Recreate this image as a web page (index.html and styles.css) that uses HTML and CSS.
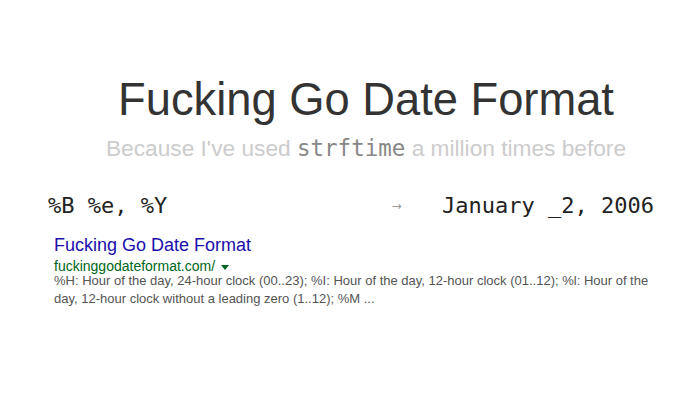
FILE: index.html
```html
<!DOCTYPE html>
<html>
<head>
<meta charset="utf-8">
<link rel="stylesheet" href="styles.css">
</head>
<body>
<div class="page">
  <header class="hero">
    <h1 class="title">Fucking Go Date Format</h1>
    <p class="subtitle">Because I've used <code class="code">strftime</code> a million times before</p>
  </header>
  <div class="row">
    <span class="fmt">%B %e, %Y</span>
    <span class="arrow">→</span>
    <span class="out">January _2, 2006</span>
  </div>
  <div class="result">
    <a class="r-title">Fucking Go Date Format</a>
    <div class="r-url">fuckinggodateformat.com/ <span class="caret"></span></div>
    <p class="r-snippet">%H: Hour of the day, 24-hour clock (00..23); %I: Hour of the day, 12-hour clock (01..12); %l: Hour of the day, 12-hour clock without a leading zero (1..12); %M ...</p>
  </div>
</div>
</body>
</html>
```

FILE: styles.css
```css
html, body {
  margin: 0;
  padding: 0;
  background: #fff;
}
.page {
  width: 700px;
  height: 400px;
  font-family: "Liberation Sans", Arial, sans-serif;
}
.hero {
  padding: 74px 0 0 32px;
  text-align: center;
}
.title {
  margin: 0;
  font-weight: normal;
  font-size: 45.3px;
  line-height: 52px;
  color: #333;
}
.subtitle {
  margin: 8px 0 0;
  font-size: 22.7px;
  line-height: 28px;
  color: #ccc;
}
.code {
  font-family: "DejaVu Sans Mono", monospace;
  font-size: 22.5px;
  color: #888;
}
.row {
  display: flex;
  align-items: center;
  justify-content: space-between;
  margin-top: 31px;
  padding: 0 46px 0 48px;
  font-family: "DejaVu Sans Mono", monospace;
  font-size: 22px;
  color: #222;
}
.arrow {
  font-family: "DejaVu Sans", sans-serif;
  font-size: 12px;
  color: #999;
  margin-left: 184px;
}
.result {
  padding: 14px 0 0 54px;
  width: 600px;
}
.r-title {
  display: block;
  font-size: 18px;
  line-height: 26px;
  color: #1a0dab;
}
.r-url {
  font-size: 14px;
  line-height: 17px;
  color: #006621;
}
.caret {
  display: inline-block;
  width: 0;
  height: 0;
  border-left: 4px solid transparent;
  border-right: 4px solid transparent;
  border-top: 5px solid #006621;
  vertical-align: middle;
  margin-left: 2px;
}
.r-snippet {
  margin: -3px 0 0;
  font-size: 13px;
  line-height: 18px;
  color: #545454;
}
```
